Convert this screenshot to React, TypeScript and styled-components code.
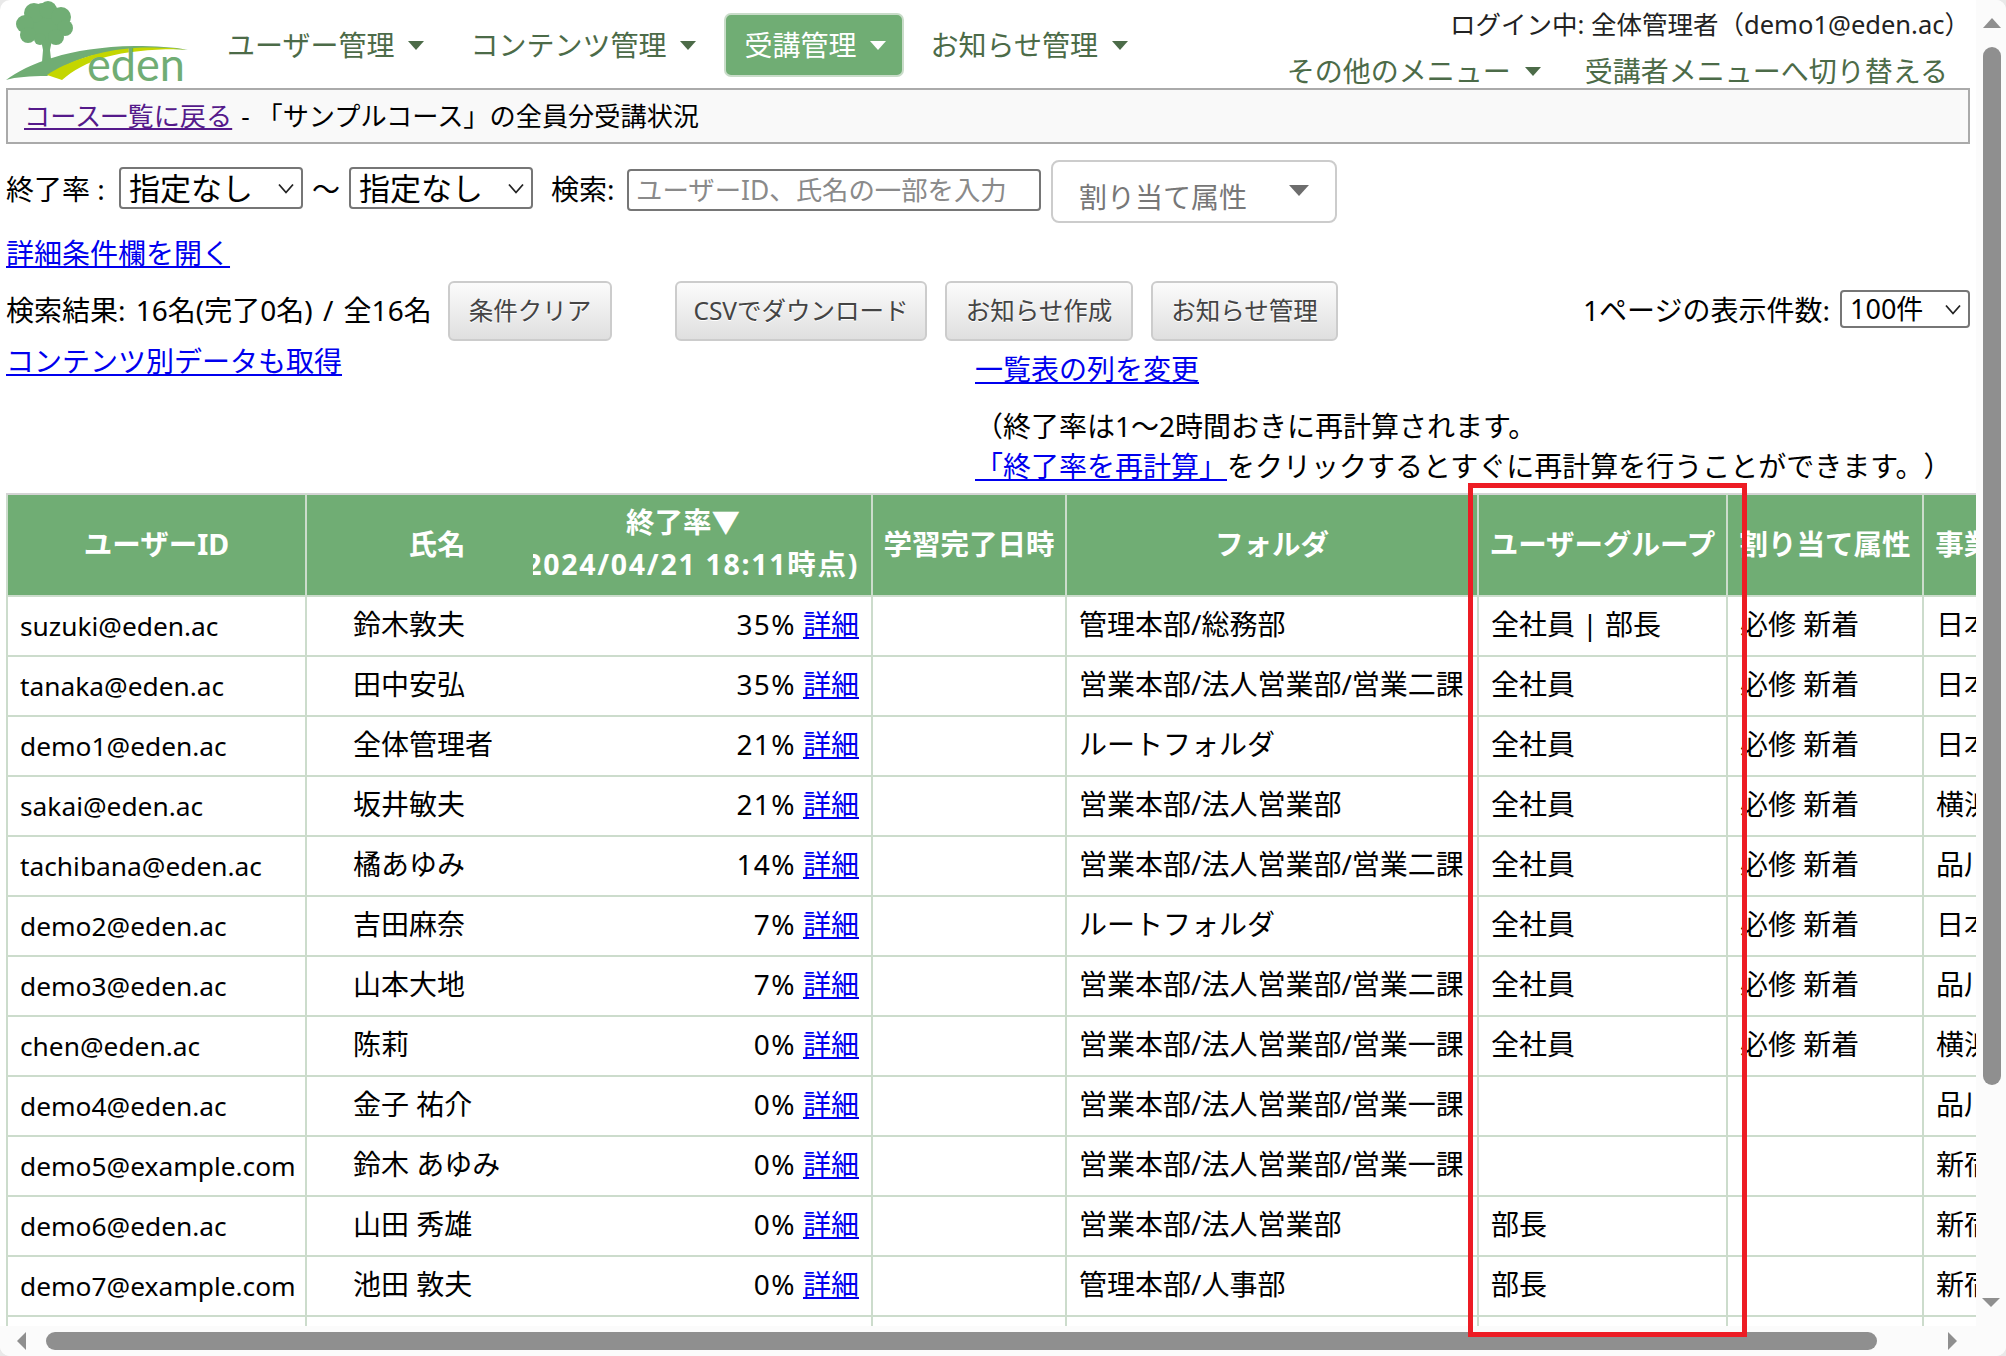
import React from "react";
import styled, { createGlobalStyle } from "styled-components";

const Global = createGlobalStyle`
  html, body { margin: 0; padding: 0; height: 100%; background: #e9e9e9; overflow: hidden; }
  body { font-family: "Noto Sans", "Noto Sans CJK JP", sans-serif; font-size: 28px; color: #000; text-spacing-trim: space-all; }
  * { box-sizing: border-box; }
`;

const Shell = styled.div`
  position: relative;
  display: grid;
  grid-template-columns: 1976px 30px;
  grid-template-rows: 1326px 30px;
  width: 2006px;
  height: 1356px;
  background: #fff;
  border-radius: 10px;
  overflow: hidden;
`;

const Main = styled.main`
  overflow: hidden;
  display: flex;
  flex-direction: column;
  min-width: 0;
`;

const Header = styled.header`
  height: 88px;
  flex: none;
  display: flex;
  padding: 0 6px;
`;

const LogoBox = styled.svg`
  flex: none;
  width: 190px;
  height: 88px;
  margin-left: -6px;
  margin-right: 17px;
`;

const Nav = styled.nav`
  display: flex;
  gap: 6px;
  padding-top: 13px;
`;

const NavItem = styled.a<{ $active?: boolean }>`
  height: 64px;
  display: flex;
  align-items: center;
  gap: 14px;
  padding: 0 ${(p) => (p.$active ? 16 : 18)}px 0 18px;
  margin-left: ${(p) => (p.$active ? 2 : 0)}px;
  color: ${(p) => (p.$active ? "#fff" : "#4c6b48")};
  background: ${(p) => (p.$active ? "#70ad74" : "transparent")};
  border: 2px solid ${(p) => (p.$active ? "#c9dcc9" : "transparent")};
  border-radius: 7px;
  font-size: 28px;
  line-height: 1;
  white-space: nowrap;
`;

const Caret = styled.i<{ $color?: string; $w?: number }>`
  flex: none;
  display: inline-block;
  width: 0;
  height: 0;
  border-left: ${(p) => p.$w ?? 8}px solid transparent;
  border-right: ${(p) => p.$w ?? 8}px solid transparent;
  border-top: ${(p) => Math.round((p.$w ?? 8) * 1.1)}px solid ${(p) => p.$color ?? "currentColor"};
`;

const HeaderRight = styled.div`
  margin-left: auto;
  display: flex;
  flex-direction: column;
  align-items: flex-end;
  padding-top: 7px;
`;

const LoginInfo = styled.div`
  font-size: 25.5px;
  line-height: 34px;
  color: #222;
  white-space: nowrap;
`;

const SubNav = styled.div`
  display: flex;
  align-items: center;
  gap: 44px;
  margin-top: 11px;
  padding-right: 22px;
  color: #4c6b48;
  font-size: 28px;
  line-height: 38px;
  white-space: nowrap;
`;

const SubItem = styled.span`
  display: inline-flex;
  align-items: center;
  gap: 14px;
`;

const Crumb = styled.div`
  flex: none;
  height: 56px;
  margin: 0 6px;
  padding: 0 0 2px 16px;
  display: flex;
  align-items: center;
  gap: 9px;
  background: #f9f9f9;
  border: 2px solid #aaa;
  font-size: 26.2px;
  white-space: nowrap;
`;

const Link = styled.a<{ $visited?: boolean }>`
  color: ${(p) => (p.$visited ? "#551a8b" : "#0000ee")};
  text-decoration: underline;
  white-space: nowrap;
`;

const FilterRow = styled.div`
  flex: none;
  height: 63px;
  margin-top: 16px;
  padding: 0 6px 7px;
  display: flex;
  align-items: center;
  white-space: nowrap;
`;

const RateLabel = styled.span`
  width: 113px;
  flex: none;
`;

const SelectWrap = styled.span<{ $w: number; $h: number; $size: number }>`
  position: relative;
  flex: none;
  display: inline-flex;
  width: ${(p) => p.$w}px;
  height: ${(p) => p.$h}px;
  select {
    appearance: none;
    width: 100%;
    height: 100%;
    padding: 0 0 0 8px;
    font: inherit;
    font-size: ${(p) => p.$size}px;
    line-height: 1;
    color: #000;
    background: #fff;
    border: 2px solid #767676;
    border-radius: 4px;
  }
  svg {
    position: absolute;
    right: 9px;
    top: 50%;
    margin-top: -5px;
    pointer-events: none;
  }
`;

const Tilde = styled.span`
  width: 46px;
  text-align: center;
`;

const SearchLabel = styled.span`
  margin-left: 18px;
  width: 76px;
`;

const SearchInput = styled.input`
  flex: none;
  width: 414px;
  height: 42px;
  margin-top: 3px;
  padding: 0 7px;
  font: inherit;
  font-size: 26.4px;
  border: 2px solid #767676;
  border-radius: 4px;
  &::placeholder { color: #8a8a8a; opacity: 1; }
`;

const AttrPicker = styled.div`
  flex: none;
  align-self: flex-start;
  width: 286px;
  height: 63px;
  margin-left: 10px;
  padding: 8px 26px 0 26px;
  display: flex;
  align-items: center;
  justify-content: space-between;
  color: #777;
  font-size: 28px;
  background: #fff;
  border: 2px solid #ccc;
  border-radius: 8px;
  i { margin-top: -10px; }
`;

const OpenLink = styled.div`
  flex: none;
  height: 36px;
  margin-top: 12px;
  padding-left: 6px;
  line-height: 36px;
`;

const ResultRow = styled.div`
  flex: none;
  height: 60px;
  margin-top: 10px;
  padding: 0 6px 5px;
  display: flex;
  align-items: center;
  white-space: nowrap;
`;

const ResultText = styled.span`
  width: 442px;
  flex: none;
  word-spacing: 3px;
`;

const Btn = styled.button<{ $w: number; $gap: number }>`
  flex: none;
  align-self: flex-start;
  width: ${(p) => p.$w}px;
  height: 60px;
  margin-right: ${(p) => p.$gap}px;
  padding: 0 0 4px;
  font: inherit;
  font-size: 24.5px;
  color: #444;
  text-shadow: 0 1px 0 #fff;
  background: linear-gradient(#fbfbfb, #dfdfdf);
  border: 2px solid #ccc;
  border-radius: 6px;
`;

const PerPage = styled.span`
  margin-left: auto;
  display: flex;
  align-items: center;
  gap: 10px;
`;

const LowerBlock = styled.div`
  flex: none;
  height: 152px;
  padding: 0 6px;
  display: flex;
`;

const LeftLink = styled.div`
  width: 969px;
  padding-top: 2px;
  line-height: 36px;
`;

const RightNotes = styled.div`
  display: flex;
  flex-direction: column;
  padding-top: 10px;
  white-space: nowrap;
`;

const ColsLink = styled.div`
  line-height: 36px;
  margin-bottom: 19px;
`;

const NoteLine = styled.div`
  line-height: 40px;
`;

const Table = styled.table`
  flex: none;
  margin-left: 6px;
  width: 2026px;
  table-layout: fixed;
  border-collapse: collapse;
  border: 2px solid #ccdccc;
  border-top-color: #d4d4d4;
`;

const Th = styled.th<{ $noRight?: boolean; $noLeft?: boolean }>`
  height: 102px;
  padding: 0 0 5px;
  background: #70ad74;
  color: #fff;
  font-weight: 700;
  font-size: 28.5px;
  white-space: nowrap;
  overflow: hidden;
  border: 2px solid #ccdccc;
  border-top-color: #d4d4d4;
  ${(p) => (p.$noRight ? "border-right: 0;" : "")}
  ${(p) => (p.$noLeft ? "border-left: 0;" : "")}
`;

const NameHead = styled.span`
  display: block;
  padding-left: 34px;
`;

const RateHead = styled.div`
  display: flex;
  flex-direction: column;
  align-items: flex-end;
  overflow: hidden;
  padding-right: 12px;
  line-height: 42px;
`;

const RateTitle = styled.span`
  padding-right: 119px;
`;

const RateStamp = styled.span`
  letter-spacing: 1.7px;
`;

const RateValue = styled.span`
  letter-spacing: 1.3px;
`;

const Td = styled.td<{ $noRight?: boolean; $noLeft?: boolean; $right?: boolean; $pad?: number; $mail?: boolean }>`
  height: 60px;
  padding: ${(p) => (p.$mail ? 1 : 0)}px ${(p) => (p.$right ? 12 : 0)}px ${(p) => (p.$mail ? 0 : 3)}px ${(p) => p.$pad ?? 12}px;
  border: 2px solid #ccdccc;
  white-space: nowrap;
  text-align: ${(p) => (p.$right ? "right" : "left")};
  line-height: 1.2;
  font-size: ${(p) => (p.$mail ? "26.3px" : "28px")};
  ${(p) => (p.$noRight ? "border-right: 0;" : "")}
  ${(p) => (p.$noLeft ? "border-left: 0;" : "")}
`;

const VBar = styled.div`
  position: relative;
  grid-row: 1 / 3;
  grid-column: 2;
  background: #fbfbfb;
  display: flex;
  flex-direction: column;
  align-items: center;
  padding: 0 5px 0 6px;
`;

const ArrowUp = styled.i`
  margin-top: 18px;
  width: 0;
  height: 0;
  border-left: 9px solid transparent;
  border-right: 9px solid transparent;
  border-bottom: 10px solid #8f8f8f;
`;

const ArrowDown = styled.i`
  position: absolute;
  top: 1298px;
  left: 6px;
  width: 0;
  height: 0;
  border-left: 9px solid transparent;
  border-right: 9px solid transparent;
  border-top: 9px solid #8f8f8f;
`;

const VThumb = styled.div`
  margin-top: 19px;
  width: 18px;
  height: 1038px;
  flex: none;
  background: #8f8f8f;
  border-radius: 9px;
`;

const HBar = styled.div`
  grid-row: 2;
  grid-column: 1;
  display: flex;
  align-items: center;
  background: #fbfbfb;
  padding: 6px 0 6px 17px;
`;

const ArrowLeft = styled.i`
  flex: none;
  width: 0;
  height: 0;
  border-top: 9px solid transparent;
  border-bottom: 9px solid transparent;
  border-right: 9px solid #8f8f8f;
`;

const ArrowRight = styled.i`
  flex: none;
  width: 0;
  height: 0;
  margin-left: 71px;
  border-top: 9px solid transparent;
  border-bottom: 9px solid transparent;
  border-left: 9px solid #8f8f8f;
`;

const HThumb = styled.div`
  flex: none;
  width: 1831px;
  height: 18px;
  margin-left: 20px;
  background: #8f8f8f;
  border-radius: 9px;
`;

const Highlight = styled.div`
  position: absolute;
  left: 1468px;
  top: 483px;
  width: 279px;
  height: 854px;
  border: 5px solid #ed1c24;
  pointer-events: none;
`;

const Logo = () => (
  <LogoBox viewBox="0 0 190 88" aria-label="eden">
    <g fill="#70ad74">
      <circle cx="44" cy="22" r="19" />
      <circle cx="34" cy="13" r="10" />
      <circle cx="48" cy="10" r="9" />
      <circle cx="61" cy="17" r="10" />
      <circle cx="65" cy="28" r="8" />
      <circle cx="25" cy="24" r="9" />
      <circle cx="28" cy="35" r="8" />
      <circle cx="40" cy="39" r="6" />
      <circle cx="56" cy="37" r="8" />
      <path d="M41 40 L52 40 L50 50 L51 59 L42 62 L43 50 Z" />
      <path d="M6 80 C28 64 68 47 135 46 C155 46 174 47 188 50 C150 47 110 50 84 58 C70 63 56 70 47 76 C30 76 16 77 6 80 Z" />
    </g>
    <path d="M47 75 C66 62 100 50 135 48 C152 47 172 48 186 49.5 C160 48.5 128 51 106 57 C88 62 72 71 62 80 C56 78 51 76 47 75 Z" fill="#c4d600" />
    <text x="87" y="81" fontFamily="Lato, sans-serif" fontWeight="400" fontSize="46" fill="#70ad74" textLength={98} lengthAdjust="spacingAndGlyphs">eden</text>
  </LogoBox>
);

const Chevron = () => (
  <svg width="16" height="11" viewBox="0 0 16 11" fill="none" stroke="#222" strokeWidth="1.8">
    <path d="M1 1.5 L8 9.5 L15 1.5" />
  </svg>
);

const Select = ({ w, h, size, label }: { w: number; h: number; size: number; label: string }) => (
  <SelectWrap $w={w} $h={h} $size={size}>
    <select defaultValue={label}>
      <option>{label}</option>
    </select>
    <Chevron />
  </SelectWrap>
);

const columns = [299, 227, 339, 194, 412, 249, 196, 110];

type Row = { id: string; name: string; rate: string; folder: string; group: string; attr: string; office: string };
const rows: Row[] = [
  { id: "suzuki@eden.ac", name: "鈴木敦夫", rate: "35%", folder: "管理本部/総務部", group: "全社員 | 部長", attr: "必修 新着", office: "日本橋" },
  { id: "tanaka@eden.ac", name: "田中安弘", rate: "35%", folder: "営業本部/法人営業部/営業二課", group: "全社員", attr: "必修 新着", office: "日本橋" },
  { id: "demo1@eden.ac", name: "全体管理者", rate: "21%", folder: "ルートフォルダ", group: "全社員", attr: "必修 新着", office: "日本橋" },
  { id: "sakai@eden.ac", name: "坂井敏夫", rate: "21%", folder: "営業本部/法人営業部", group: "全社員", attr: "必修 新着", office: "横浜" },
  { id: "tachibana@eden.ac", name: "橘あゆみ", rate: "14%", folder: "営業本部/法人営業部/営業二課", group: "全社員", attr: "必修 新着", office: "品川" },
  { id: "demo2@eden.ac", name: "吉田麻奈", rate: "7%", folder: "ルートフォルダ", group: "全社員", attr: "必修 新着", office: "日本橋" },
  { id: "demo3@eden.ac", name: "山本大地", rate: "7%", folder: "営業本部/法人営業部/営業二課", group: "全社員", attr: "必修 新着", office: "品川" },
  { id: "chen@eden.ac", name: "陈莉", rate: "0%", folder: "営業本部/法人営業部/営業一課", group: "全社員", attr: "必修 新着", office: "横浜" },
  { id: "demo4@eden.ac", name: "金子 祐介", rate: "0%", folder: "営業本部/法人営業部/営業一課", group: "", attr: "", office: "品川" },
  { id: "demo5@example.com", name: "鈴木 あゆみ", rate: "0%", folder: "営業本部/法人営業部/営業一課", group: "", attr: "", office: "新宿" },
  { id: "demo6@eden.ac", name: "山田 秀雄", rate: "0%", folder: "営業本部/法人営業部", group: "部長", attr: "", office: "新宿" },
  { id: "demo7@example.com", name: "池田 敦夫", rate: "0%", folder: "管理本部/人事部", group: "部長", attr: "", office: "新宿" },
  { id: "", name: "", rate: "", folder: "", group: "", attr: "", office: "" },
];

export default function App() {
  return (
    <>
      <Global />
      <Shell>
        <Main>
          <Header>
            <Logo />
            <Nav>
              <NavItem>ユーザー管理<Caret /></NavItem>
              <NavItem>コンテンツ管理<Caret /></NavItem>
              <NavItem $active>受講管理<Caret /></NavItem>
              <NavItem>お知らせ管理<Caret /></NavItem>
            </Nav>
            <HeaderRight>
              <LoginInfo>ログイン中: 全体管理者（demo1@eden.ac）</LoginInfo>
              <SubNav>
                <SubItem>その他のメニュー<Caret /></SubItem>
                <SubItem>受講者メニューへ切り替える</SubItem>
              </SubNav>
            </HeaderRight>
          </Header>
          <Crumb>
            <Link $visited>コース一覧に戻る</Link>
            <span>- 「サンプルコース」の全員分受講状況</span>
          </Crumb>
          <FilterRow>
            <RateLabel>終了率 :</RateLabel>
            <Select w={184} h={42} size={31} label="指定なし" />
            <Tilde>～</Tilde>
            <Select w={184} h={42} size={31} label="指定なし" />
            <SearchLabel>検索:</SearchLabel>
            <SearchInput placeholder="ユーザーID、氏名の一部を入力" />
            <AttrPicker>割り当て属性<Caret $color="#6d6d6d" $w={10} /></AttrPicker>
          </FilterRow>
          <OpenLink><Link>詳細条件欄を開く</Link></OpenLink>
          <ResultRow>
            <ResultText>検索結果: 16名(完了0名) / 全16名</ResultText>
            <Btn $w={164} $gap={63}>条件クリア</Btn>
            <Btn $w={252} $gap={18}>CSVでダウンロード</Btn>
            <Btn $w={188} $gap={18}>お知らせ作成</Btn>
            <Btn $w={187} $gap={0}>お知らせ管理</Btn>
            <PerPage>
              1ページの表示件数:
              <Select w={130} h={38} size={27} label="100件" />
            </PerPage>
          </ResultRow>
          <LowerBlock>
            <LeftLink><Link>コンテンツ別データも取得</Link></LeftLink>
            <RightNotes>
              <ColsLink><Link>一覧表の列を変更</Link></ColsLink>
              <NoteLine>（終了率は1～2時間おきに再計算されます。</NoteLine>
              <NoteLine><Link>「終了率を再計算」</Link>をクリックするとすぐに再計算を行うことができます。）</NoteLine>
            </RightNotes>
          </LowerBlock>
          <Table>
            <colgroup>
              {columns.map((w, i) => <col key={i} style={{ width: w }} />)}
            </colgroup>
            <thead>
              <tr>
                <Th>ユーザーID</Th>
                <Th $noRight><NameHead>氏名</NameHead></Th>
                <Th $noLeft>
                  <RateHead>
                    <RateTitle>終了率▼</RateTitle>
                    <RateStamp>(2024/04/21 18:11時点)</RateStamp>
                  </RateHead>
                </Th>
                <Th>学習完了日時</Th>
                <Th>フォルダ</Th>
                <Th>ユーザーグループ</Th>
                <Th>割り当て属性</Th>
                <Th>事業所</Th>
              </tr>
            </thead>
            <tbody>
              {rows.map((r, i) => (
                <tr key={i}>
                  <Td $mail>{r.id}</Td>
                  <Td $noRight $pad={46}>{r.name}</Td>
                  <Td $noLeft $right>{r.rate && <><RateValue>{r.rate}</RateValue> <Link>詳細</Link></>}</Td>
                  <Td />
                  <Td>{r.folder}</Td>
                  <Td>{r.group}</Td>
                  <Td>{r.attr}</Td>
                  <Td>{r.office}</Td>
                </tr>
              ))}
            </tbody>
          </Table>
        </Main>
        <VBar>
          <ArrowUp />
          <VThumb />
          <ArrowDown />
        </VBar>
        <HBar>
          <ArrowLeft />
          <HThumb />
          <ArrowRight />
        </HBar>
        <Highlight />
      </Shell>
    </>
  );
}
